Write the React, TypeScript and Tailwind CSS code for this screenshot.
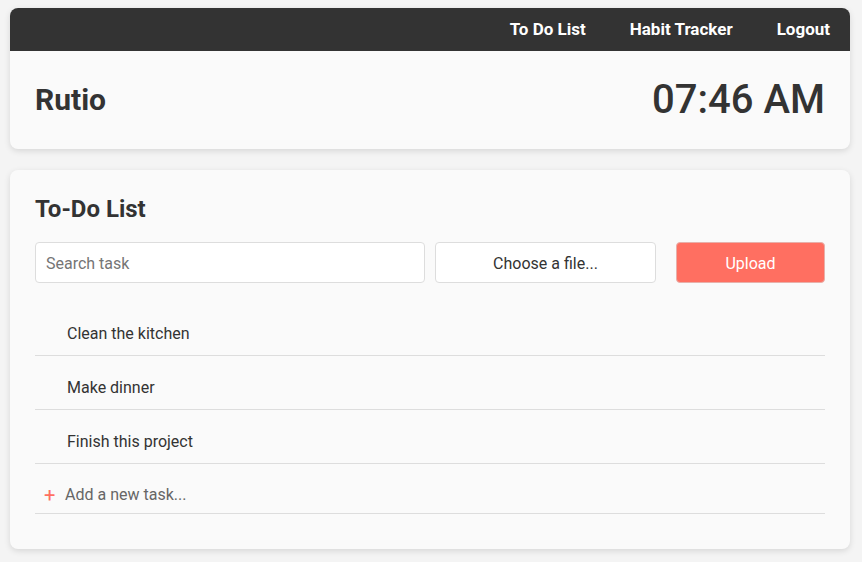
import React from "react";

const tasks = ["Clean the kitchen", "Make dinner", "Finish this project"];

const App: React.FC = () => {
  const [search, setSearch] = React.useState<string>("");

  return (
    <div
      className="min-h-[562px] bg-[#f4f4f4] pl-[10px] pr-[12px] pt-[8px] pb-[13px] text-[#333]"
      style={{ fontFamily: "Roboto, 'Noto Sans', sans-serif" }}
    >
      <div className="rounded-[8px] bg-[#fafafa] shadow-[0_2px_6px_rgba(0,0,0,0.12)]">
        <nav className="flex h-[43px] items-center justify-end gap-[44px] rounded-t-[8px] bg-[#333] pr-[20px] text-[17px] font-bold text-white">
          <a className="cursor-pointer">To Do List</a>
          <a className="cursor-pointer">Habit Tracker</a>
          <a className="cursor-pointer">Logout</a>
        </nav>
        <div className="flex items-center justify-between px-[25px] py-[25px]">
          <h1 className="text-[30px] font-bold leading-[36px]">Rutio</h1>
          <div className="text-[40px] font-medium leading-[48px]">07:46 AM</div>
        </div>
      </div>

      <div className="mt-[21px] rounded-[8px] bg-[#fafafa] px-[25px] pt-[25px] pb-[35px] shadow-[0_2px_6px_rgba(0,0,0,0.12)]">
        <h2 className="text-[24px] font-bold leading-[29px]">To-Do List</h2>
        <div className="mt-[18px] flex h-[41px] text-[16px]">
          <input
            className="h-full w-[390px] rounded-[4px] border border-[#ddd] bg-white px-[10px] pt-[2px] text-[#333] outline-none placeholder:text-[#757575]"
            placeholder="Search task"
            value={search}
            onChange={(e) => setSearch(e.target.value)}
          />
          <button className="ml-[10px] h-full w-[221px] rounded-[4px] border border-[#ddd] bg-white pt-[2px] text-[#333]">
            Choose a file...
          </button>
          <button className="ml-[20px] h-full w-[149px] rounded-[4px] border border-[#e8b0aa] bg-[#ff6f61] pt-[2px] text-white">
            Upload
          </button>
        </div>
        <ul className="mt-[19px] text-[16px]">
          {tasks
            .filter((t) => t.toLowerCase().includes(search.toLowerCase()))
            .map((t) => (
              <li
                key={t}
                className="border-b border-[#ddd] pt-[21px] pb-[10px] pl-[32px] leading-[22px]"
              >
                {t}
              </li>
            ))}
          <li className="flex items-center border-b border-[#ddd] pt-[20px] pb-[7px] pl-[9px] leading-[22px] text-[#666]">
            <span className="w-[21px] text-[20px] text-[#ff6f61]">+</span>
            <span>Add a new task...</span>
          </li>
        </ul>
      </div>
    </div>
  );
};

export default App;
